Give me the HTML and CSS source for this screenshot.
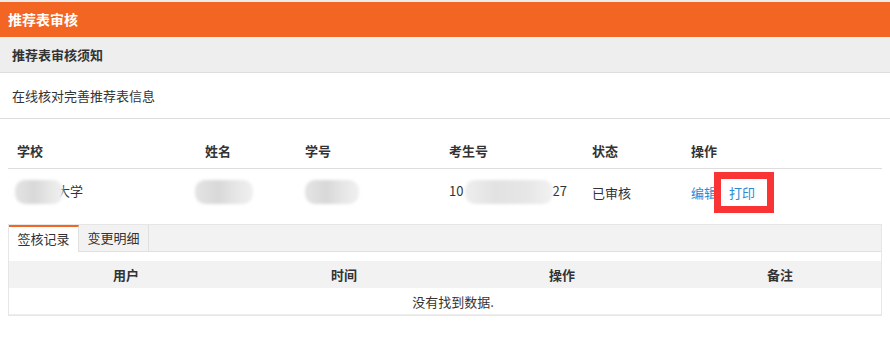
FILE: index.html
```html
<!DOCTYPE html>
<html>
<head>
  <meta charset="utf-8">
  <title>推荐表审核</title>
  <link rel="stylesheet" href="styles.css">
</head>
<body>

  <header class="page-title">推荐表审核</header>

  <section class="notice">
    <div class="notice-head">推荐表审核须知</div>
    <div class="notice-body">在线核对完善推荐表信息</div>
  </section>

  <div class="list-wrap">
    <table class="list-table">
      <colgroup>
        <col style="width:188px">
        <col style="width:100px">
        <col style="width:144px">
        <col style="width:143px">
        <col style="width:99px">
        <col>
      </colgroup>
      <thead>
        <tr>
          <th>学校</th>
          <th>姓名</th>
          <th>学号</th>
          <th>考生号</th>
          <th>状态</th>
          <th>操作</th>
        </tr>
      </thead>
      <tbody>
        <tr>
          <td><span class="blur blur-school"></span><span class="under">大学</span></td>
          <td><span class="blur blur-name"></span></td>
          <td><span class="blur blur-no"></span></td>
          <td>10<span class="blur blur-exam"></span>27</td>
          <td>已审核</td>
          <td>
            <a class="op-link" href="#">编辑</a>
            <a class="op-link print-link" href="#">打印</a>
          </td>
        </tr>
      </tbody>
    </table>
  </div>

  <section class="tab-box">
    <div class="tab-bar">
      <span class="tab active">签核记录</span>
      <span class="tab">变更明细</span>
    </div>
    <table class="log-table">
      <thead>
        <tr>
          <th>用户</th>
          <th>时间</th>
          <th>操作</th>
          <th>备注</th>
        </tr>
      </thead>
      <tbody>
        <tr>
          <td colspan="4" class="empty">没有找到数据.</td>
        </tr>
      </tbody>
    </table>
  </section>

</body>
</html>
```

FILE: styles.css
```css
body {
  margin: 0;
  padding: 0;
  font-family: "Noto Sans CJK SC", "Microsoft YaHei", sans-serif;
  font-size: 13px;
  color: #333;
  background-color: white;
  border-top: 2px solid #ececec;
}

.page-title {
  height: 35px;
  line-height: 35px;
  padding-left: 8px;
  background-color: #f36523;
  color: white;
  font-size: 14px;
  font-weight: bold;
}

.notice-head {
  height: 35px;
  line-height: 35px;
  padding-left: 12px;
  background-color: #eeeeee;
  border-bottom: 1px solid #dddddd;
  font-weight: bold;
}

.notice-body {
  height: 45px;
  line-height: 45px;
  padding-left: 12px;
  border-bottom: 1px solid #dddddd;
}

.list-wrap {
  padding: 14px 8px 0;
}

.list-table {
  width: 100%;
  table-layout: fixed;
  border-collapse: collapse;
}

.list-table th {
  height: 35px;
  padding: 0 0 0 9px;
  text-align: left;
  font-weight: bold;
  border-bottom: 1px solid #dddddd;
}

.list-table td {
  height: 46px;
  padding: 0 0 0 9px;
  white-space: nowrap;
}

/* mosaic over personal data */
.blur {
  display: inline-block;
  vertical-align: middle;
  height: 24px;
  border-radius: 10px;
  background: linear-gradient(90deg, #e4e4e4, #d8d8d8 40%, #e6e6e6 70%, #f0f0f0);
  filter: blur(1.5px);
}

.blur-school {
  width: 48px;
  margin-left: -2px;
  margin-right: -6px;
  position: relative;
  z-index: 1;
}

.blur-name {
  width: 58px;
  margin-left: -10px;
}

.blur-no {
  width: 54px;
  margin-left: 0;
}

.blur-exam {
  width: 88px;
  margin: 0 -1px 0 2px;
  background: linear-gradient(90deg, #eeeeee, #e2e2e2 35%, #e6e6e6 70%, #f2f2f2);
}

.op-link {
  color: #2a8ad4;
  text-decoration: none;
}

.print-link {
  display: inline-block;
  position: relative;
  margin-left: 9px;
  line-height: 15px;
}

/* red annotation frame around the print link */
.print-link::after {
  content: "";
  position: absolute;
  top: -13px;
  bottom: -13px;
  left: -15px;
  right: -19px;
  border: 7px solid #fa3434;
}

.tab-box {
  margin: 9px 8px 0 8px;
  border: 1px solid #e6e6e6;
  overflow: hidden;
}

.tab-bar {
  display: flex;
  height: 26px;
  background-color: #f2f2f2;
  border-bottom: 1px solid #e0e0e0;
}

.tab {
  width: 70px;
  height: 26px;
  line-height: 26px;
  text-align: center;
  border-right: 1px solid #e0e0e0;
  box-sizing: border-box;
}

.tab.active {
  height: 27px;
  line-height: 23px;
  background-color: white;
  border-top: 2px solid #f36523;
}

.log-table {
  width: 880px;
  margin-top: 9px;
  table-layout: fixed;
  border-collapse: collapse;
}

.log-table th {
  height: 27px;
  padding: 0;
  background-color: #f2f2f2;
  font-weight: bold;
  text-align: center;
}

.log-table th:first-child {
  padding-left: 8px;
  width: 218px;
}

.log-table td {
  height: 26px;
  padding: 0 0 0 8px;
  text-align: center;
  border-bottom: 1px solid #eeeeee;
}
```
